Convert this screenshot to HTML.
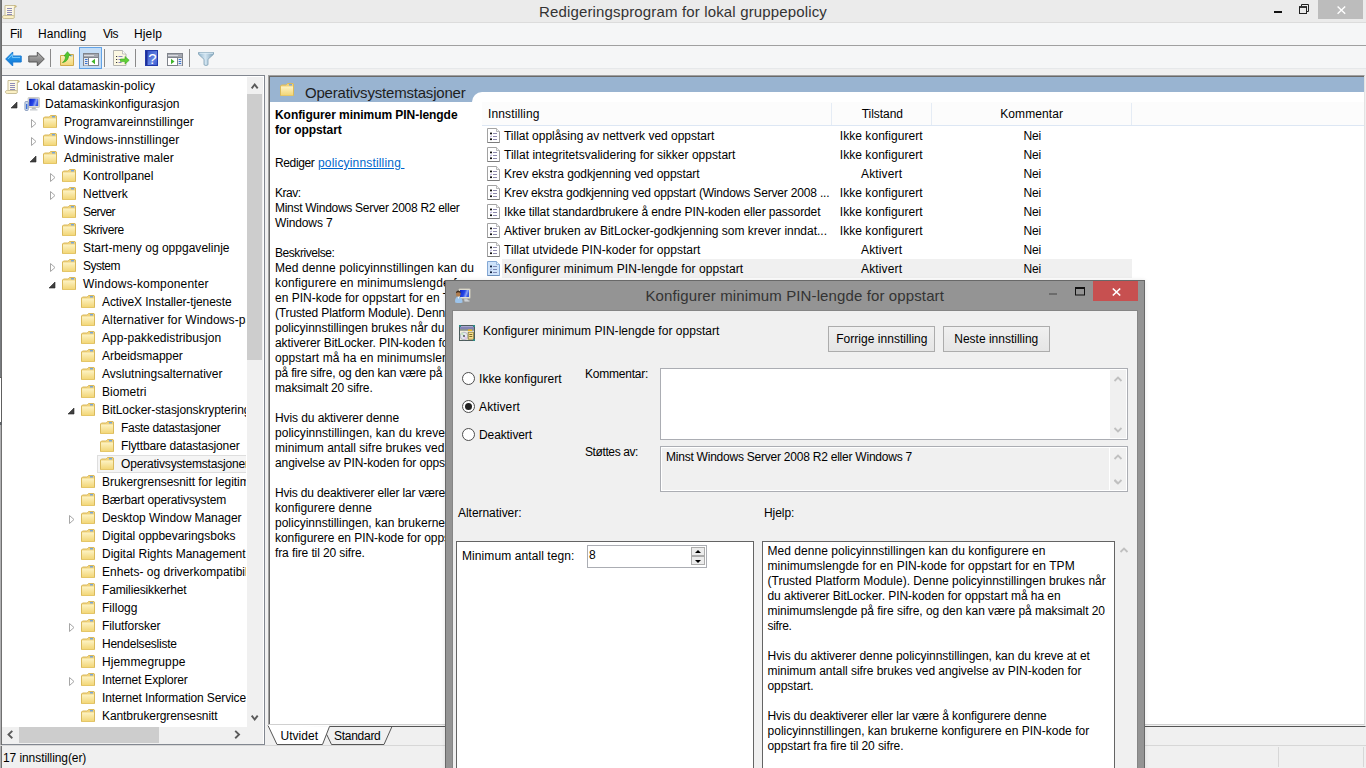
<!DOCTYPE html><html><head><meta charset="utf-8"><title>Redigeringsprogram for lokal gruppepolicy</title><style>
html,body{margin:0;padding:0}
body{width:1366px;height:768px;overflow:hidden;background:#f0f0f0;position:relative;font-family:"Liberation Sans",sans-serif;font-size:12px;color:#000;line-height:15px}
.a{position:absolute}
.t{position:absolute;white-space:nowrap;line-height:16px;height:16px}
.b{position:absolute;box-sizing:border-box}
svg{position:absolute;overflow:visible}
</style></head><body>
<svg width="0" height="0" style="position:absolute"><defs>
<linearGradient id="gf" x1="0" y1="0" x2="0" y2="1"><stop offset="0" stop-color="#fdf3c4"/><stop offset="1" stop-color="#f2d574"/></linearGradient>
<linearGradient id="gb" x1="0" y1="0" x2="0" y2="1"><stop offset="0" stop-color="#52bcfa"/><stop offset="0.500" stop-color="#1c8ce4"/><stop offset="1" stop-color="#1070d0"/></linearGradient>
<linearGradient id="gscr" x1="0" y1="0" x2="1" y2="0.300"><stop offset="0" stop-color="#0a22c8"/><stop offset="0.550" stop-color="#2848e8"/><stop offset="0.800" stop-color="#8ea4f4"/><stop offset="1" stop-color="#3858e0"/></linearGradient><linearGradient id="ghelp" x1="0" y1="0" x2="1" y2="1"><stop offset="0" stop-color="#2c48c0"/><stop offset="0.600" stop-color="#6484e4"/><stop offset="1" stop-color="#3454cc"/></linearGradient><linearGradient id="gfun" x1="0" y1="0" x2="1" y2="0"><stop offset="0" stop-color="#8fb4cc"/><stop offset="0.450" stop-color="#d4e6f2"/><stop offset="1" stop-color="#7fa4bc"/></linearGradient><linearGradient id="gg" x1="0" y1="0" x2="0" y2="1"><stop offset="0" stop-color="#b8b8b8"/><stop offset="1" stop-color="#6e6e6e"/></linearGradient>
<g id="folder"><path d="M6.500 1.500l1 -1h5.500l0.500 0.500v11.500h-13v-9.500l1 -1h4z" fill="#f0d27a" stroke="#d9b95c" stroke-width="1"/><path d="M1 3.500h12v9h-12z" fill="url(#gf)"/><rect x="9" y="1.200" width="3" height="1.200" fill="#5a9cf0"/></g>
<g id="scroll"><path d="M3 1.500h10.500c1.300 0 1.300 1.800 0 1.800h-1.200v8.700h-9.300z" fill="#fdf8e4" stroke="#c9bf98" stroke-width="1"/><path d="M12.300 1.500c1.600 0 1.600 1.800 0.200 1.800" fill="#e8d9a0" stroke="#c2a860" stroke-width="0.800"/><path d="M0.500 13c0 -1.500 0.800 -1.500 1.800 -1.500h9c1.400 0 1.400 3 0 3h-9c-1 0 -1.800 -0.300 -1.800 -1.500z" fill="#fbf0c4" stroke="#c9bf98" stroke-width="1"/><path d="M5 4.500h5M5 6.500h5M5 8.500h5M5 10.500h5" stroke="#8f8bb8" stroke-width="1"/></g>
<g id="pol"><path d="M0.500 0.500h9l3 3v11h-12z" fill="#fff" stroke="#a2a2a2"/><path d="M0.500 14.500h12" stroke="#7c7c7c"/><path d="M9.500 0.500v3h3" fill="#f4f4f4" stroke="#a8a8a8" stroke-width="0.800"/><rect x="3" y="4.600" width="2" height="1.700" fill="#111"/><rect x="3" y="10.400" width="2" height="1.700" fill="#111"/><path d="M3.200 9l1.600 -1" stroke="#8a7cc0" stroke-width="0.900"/><path d="M6 5.500h4M6 8.500h4M6 11.500h4" stroke="#8c88ac" stroke-width="1"/></g>
<g id="pols"><path d="M0.500 0.500h9l3 3v11h-12z" fill="#cfe3fa" stroke="#84a8d4"/><path d="M0.500 14.500h12" stroke="#6c90bc"/><path d="M9.500 0.500v3h3" fill="#e4effc" stroke="#84a8d4" stroke-width="0.800"/><rect x="3" y="4.600" width="2" height="1.700" fill="#10203c"/><rect x="3" y="10.400" width="2" height="1.700" fill="#10203c"/><path d="M3.200 9l1.600 -1" stroke="#7c84c0" stroke-width="0.900"/><path d="M6 5.500h4M6 8.500h4M6 11.500h4" stroke="#7c88b4" stroke-width="1"/></g>
<g id="exp"><path d="M0.500 0.500l4.500 4 -4.500 4z" fill="#fff" stroke="#a6a6a6" stroke-width="1"/></g>
<g id="col"><path d="M6 0v6h-6z" fill="#404040" stroke="#262626" stroke-width="0.600"/></g>
</defs></svg>
<div class="b" style="left:0px;top:0px;width:1366px;height:23px;background:#ebebeb;"></div>
<div class="b" style="left:0px;top:22px;width:1366px;height:1px;background:#dcdcdc;"></div>
<div class="b" style="left:0px;top:23px;width:1366px;height:22px;background:#f5f6f7;"></div>
<div class="b" style="left:0px;top:45px;width:1366px;height:1px;background:#a0a0a0;"></div>
<div class="b" style="left:0px;top:46px;width:1366px;height:22px;background:#f5f6f7;"></div>
<div class="b" style="left:0px;top:68px;width:1366px;height:1px;background:#e6e8ea;"></div>
<div class="b" style="left:0px;top:69px;width:1366px;height:6px;background:#f0f0f0;"></div>
<div class="b" style="left:0px;top:0px;width:1px;height:377px;background:#787b7e;"></div>
<div class="b" style="left:1px;top:0px;width:1px;height:377px;background:#6c6c6c;"></div>
<div class="b" style="left:0px;top:377px;width:2px;height:1px;background:#5e5e5e;"></div>
<div class="b" style="left:0px;top:378px;width:1px;height:44px;background:#fff;"></div>
<div class="b" style="left:1px;top:378px;width:1px;height:44px;background:#606060;"></div>
<div class="b" style="left:0px;top:422px;width:2px;height:3px;background:#606468;"></div>
<div class="b" style="left:0px;top:425px;width:1px;height:343px;background:#b0b0b2;"></div>
<div class="b" style="left:1px;top:425px;width:1px;height:343px;background:#707070;"></div>
<svg style="left:2px;top:3.5px" width="16" height="16"><use href="#scroll"/></svg>
<div class="t" style="left:539px;top:2px;font-size:15px;letter-spacing:0.151px;height:20px;line-height:20px;color:#333;">Redigeringsprogram for lokal gruppepolicy</div>
<div class="b" style="left:1318px;top:0px;width:45px;height:19px;background:#bcbcbc;"></div>
<svg style="left:1336.500px;top:5.500px" width="9" height="8"><path d="M0.600 0.500l7.600 7.200M8.200 0.500l-7.600 7.200" stroke="#fff" stroke-width="1.400"/></svg>
<div class="b" style="left:1274px;top:11px;width:8px;height:2px;background:#111;"></div>
<svg style="left:1299px;top:4px" width="10" height="10"><path d="M2.500 2v-1.500h7v7h-1.500" fill="none" stroke="#222"/><rect x="0.500" y="3" width="7" height="6.500" fill="none" stroke="#222"/><path d="M0 3h8" stroke="#222" stroke-width="1.600"/></svg>
<div class="t" style="left:10px;top:26px;font-size:12px;letter-spacing:-0.224px;">Fil</div>
<div class="t" style="left:38px;top:26px;font-size:12px;letter-spacing:0.103px;">Handling</div>
<div class="t" style="left:103px;top:26px;font-size:12px;letter-spacing:-0.484px;">Vis</div>
<div class="t" style="left:134px;top:26px;font-size:12px;letter-spacing:0.128px;">Hjelp</div>
<div class="b" style="left:79px;top:47px;width:23px;height:22px;background:#c4ddf6;border:1px solid #62a3e6;"></div>
<div class="b" style="left:50px;top:49px;width:1px;height:18px;background:#8a8a8a;"></div>
<div class="b" style="left:104px;top:49px;width:1px;height:18px;background:#8a8a8a;"></div>
<div class="b" style="left:135px;top:49px;width:1px;height:18px;background:#8a8a8a;"></div>
<div class="b" style="left:189px;top:49px;width:1px;height:18px;background:#8a8a8a;"></div>
<svg style="left:4.500px;top:50.500px" width="17" height="16"><path d="M0.700 8l7 -7v4h8.500v6h-8.500v4z" fill="url(#gb)" stroke="#1878d0" stroke-width="1"/><path d="M3 8l4.500 -4.500v3h7.500" fill="none" stroke="#8fd6ff" stroke-width="1" opacity="0.700"/></svg>
<svg style="left:27.500px;top:50.500px" width="17" height="16"><path d="M16.300 8l-7 -7v4h-8.500v6h8.500v4z" fill="url(#gg)" stroke="#585858" stroke-width="1"/></svg>
<svg style="left:60px;top:51px" width="16" height="16"><path d="M0.500 4.500h5l1 -1h7v11h-13z" fill="url(#gf)" stroke="#cfa94a"/><rect x="10" y="4.300" width="2.500" height="1" fill="#5a9cf0"/><path d="M2.500 11.500c2 -1 3 -3.500 3.200 -6.500h-1.700l3.500 -4.300 3 3.800h-1.800c-0.500 4 -2.200 6.500 -6.200 7z" fill="#52c82e" stroke="#2d9a16" stroke-width="0.600"/></svg>
<svg style="left:83px;top:53px" width="16" height="13"><rect x="0.500" y="0.500" width="15" height="12" fill="#fff" stroke="#80848c"/><rect x="1" y="1" width="14" height="3" fill="#a4a8b0"/><path d="M1 2.500h10" stroke="#e8e8ec" stroke-width="0.800"/><path d="M1 4.500h14" stroke="#80848c"/><rect x="1" y="5" width="4.500" height="7.500" fill="#e4e8f0"/><path d="M5.500 4.500v8.500" stroke="#80848c"/><path d="M2 6.500h2.500M2 8.500h2.500M2 10.500h2.500" stroke="#3b74d0" stroke-width="1"/><path d="M12 5.800v5.400l-3.500 -2.700z" fill="#3fb52a"/></svg>
<svg style="left:113px;top:50px" width="17" height="17"><path d="M0.500 0.500h9l3.500 3.500v11.500h-12.500z" fill="#fcf8e2" stroke="#b4b4b0"/><path d="M9.500 0.500v3.500h3.500" fill="#fff" stroke="#b4b4b0" stroke-width="0.800"/><path d="M3 6.500h1.200M3 9.500h1.200M3 12.500h1.200" stroke="#333" stroke-width="1.200"/><path d="M5.500 6.500h4M5.500 9.500h2.500M5.500 12.500h3" stroke="#8a86c0"/><path d="M7.500 9h4.500v-2.500l4.200 3.800 -4.200 3.800v-2.500h-4.500z" fill="#5fd036" stroke="#35a81c" stroke-width="0.600"/></svg>
<svg style="left:145px;top:50px" width="13" height="16"><rect x="0" y="0" width="13" height="16" fill="url(#ghelp)"/><rect x="0" y="0" width="2.500" height="16" fill="#1c2f98"/><rect x="0.500" y="0.500" width="12" height="15" fill="none" stroke="#2238a8"/><text x="7.500" y="13.500" font-family="Liberation Sans,sans-serif" font-size="15" fill="#fff" text-anchor="middle">?</text></svg>
<svg style="left:167px;top:53px" width="16" height="13"><rect x="0.500" y="0.500" width="15" height="12" fill="#fff" stroke="#80848c"/><rect x="1" y="1" width="14" height="3" fill="#a4a8b0"/><path d="M1 2.500h10" stroke="#e8e8ec" stroke-width="0.800"/><path d="M1 4.500h14" stroke="#80848c"/><rect x="10.500" y="5" width="4.500" height="7.500" fill="#e4e8f0"/><path d="M10.500 4.500v8.500" stroke="#80848c"/><path d="M11.700 6.500h2.500M11.700 8.500h2.500M11.700 10.500h2.500" stroke="#3b74d0" stroke-width="1"/><path d="M4 5.800v5.400l3.500 -2.700z" fill="#3fb52a"/></svg>
<svg style="left:198px;top:51px" width="17" height="16"><path d="M1 1.500h14.500v1.800l-5.500 5v5.500q-2 1.500 -4 0v-5.500l-5.500 -5v-1.800z" fill="url(#gfun)" stroke="#7f9fb4" stroke-width="0.800"/><path d="M1.500 2.200h13.500" stroke="#dcecf6" stroke-width="1"/></svg>
<div class="b" style="left:2px;top:75px;width:263px;height:670px;background:#fff;border:1px solid #828790;border-left:0;"></div>
<div class="a" style="left:3px;top:76px;width:243px;height:650px;overflow:hidden">
<svg style="left:2px;top:3px" width="16" height="16"><use href="#scroll"/></svg>
<div class="t" style="left:23px;top:2px;font-size:12px;letter-spacing:0.041px;">Lokal datamaskin-policy</div>
<svg style="left:8px;top:26px" width="6" height="6"><use href="#col"/></svg>
<svg style="left:21px;top:20px" width="16" height="16"><rect x="4" y="1.500" width="11.500" height="10" rx="0.800" fill="#dcdcd4" stroke="#b8b8b0" stroke-width="0.600"/><rect x="5.200" y="2.700" width="9" height="7.300" fill="url(#gscr)"/><path d="M8 11.500h3.500l0.500 1.800h-4.500z" fill="#b4b8bc"/><rect x="6" y="13.200" width="7.500" height="1.300" fill="#c8ccd0"/><rect x="0.900" y="5.500" width="3.400" height="9" rx="1" fill="#c9d6ea" stroke="#7d93b8" stroke-width="0.800"/><rect x="2" y="8" width="1.300" height="5" fill="#3b6fd8"/></svg>
<div class="t" style="left:42px;top:20px;font-size:12px;letter-spacing:-0.011px;">Datamaskinkonfigurasjon</div>
<svg style="left:28px;top:43px" width="6" height="9"><use href="#exp"/></svg>
<svg style="left:40px;top:39px" width="16" height="16"><use href="#folder"/></svg>
<div class="t" style="left:61px;top:38px;font-size:12px;letter-spacing:0.015px;">Programvareinnstillinger</div>
<svg style="left:28px;top:61px" width="6" height="9"><use href="#exp"/></svg>
<svg style="left:40px;top:57px" width="16" height="16"><use href="#folder"/></svg>
<div class="t" style="left:61px;top:56px;font-size:12px;letter-spacing:0.132px;">Windows-innstillinger</div>
<svg style="left:27px;top:80px" width="6" height="6"><use href="#col"/></svg>
<svg style="left:40px;top:75px" width="16" height="16"><use href="#folder"/></svg>
<div class="t" style="left:61px;top:74px;font-size:12px;letter-spacing:0.052px;">Administrative maler</div>
<svg style="left:47px;top:97px" width="6" height="9"><use href="#exp"/></svg>
<svg style="left:59px;top:93px" width="16" height="16"><use href="#folder"/></svg>
<div class="t" style="left:80px;top:92px;font-size:12px;letter-spacing:0.034px;">Kontrollpanel</div>
<svg style="left:47px;top:115px" width="6" height="9"><use href="#exp"/></svg>
<svg style="left:59px;top:111px" width="16" height="16"><use href="#folder"/></svg>
<div class="t" style="left:80px;top:110px;font-size:12px;letter-spacing:0.008px;">Nettverk</div>
<svg style="left:59px;top:129px" width="16" height="16"><use href="#folder"/></svg>
<div class="t" style="left:80px;top:128px;font-size:12px;letter-spacing:-0.557px;">Server</div>
<svg style="left:59px;top:147px" width="16" height="16"><use href="#folder"/></svg>
<div class="t" style="left:80px;top:146px;font-size:12px;letter-spacing:-0.408px;">Skrivere</div>
<svg style="left:59px;top:165px" width="16" height="16"><use href="#folder"/></svg>
<div class="t" style="left:80px;top:164px;font-size:12px;letter-spacing:0.016px;">Start-meny og oppgavelinje</div>
<svg style="left:47px;top:187px" width="6" height="9"><use href="#exp"/></svg>
<svg style="left:59px;top:183px" width="16" height="16"><use href="#folder"/></svg>
<div class="t" style="left:80px;top:182px;font-size:12px;letter-spacing:-0.503px;">System</div>
<svg style="left:46px;top:206px" width="6" height="6"><use href="#col"/></svg>
<svg style="left:59px;top:201px" width="16" height="16"><use href="#folder"/></svg>
<div class="t" style="left:80px;top:200px;font-size:12px;letter-spacing:0.16px;">Windows-komponenter</div>
<svg style="left:78px;top:219px" width="16" height="16"><use href="#folder"/></svg>
<div class="t" style="left:99px;top:218px;font-size:12px;letter-spacing:-0.099px;">ActiveX Installer-tjeneste</div>
<svg style="left:78px;top:237px" width="16" height="16"><use href="#folder"/></svg>
<div class="t" style="left:99px;top:236px;font-size:12px;letter-spacing:0.108px;">Alternativer for Windows-på</div>
<svg style="left:78px;top:255px" width="16" height="16"><use href="#folder"/></svg>
<div class="t" style="left:99px;top:254px;font-size:12px;letter-spacing:0.056px;">App-pakkedistribusjon</div>
<svg style="left:78px;top:273px" width="16" height="16"><use href="#folder"/></svg>
<div class="t" style="left:99px;top:272px;font-size:12px;letter-spacing:-0.048px;">Arbeidsmapper</div>
<svg style="left:78px;top:291px" width="16" height="16"><use href="#folder"/></svg>
<div class="t" style="left:99px;top:290px;font-size:12px;letter-spacing:-0.001px;">Avslutningsalternativer</div>
<svg style="left:78px;top:309px" width="16" height="16"><use href="#folder"/></svg>
<div class="t" style="left:99px;top:308px;font-size:12px;letter-spacing:0.061px;">Biometri</div>
<svg style="left:65px;top:332px" width="6" height="6"><use href="#col"/></svg>
<svg style="left:78px;top:327px" width="16" height="16"><use href="#folder"/></svg>
<div class="t" style="left:99px;top:326px;font-size:12px;letter-spacing:-0.086px;">BitLocker-stasjonskryptering</div>
<svg style="left:97px;top:345px" width="16" height="16"><use href="#folder"/></svg>
<div class="t" style="left:118px;top:344px;font-size:12px;letter-spacing:-0.311px;">Faste datastasjoner</div>
<svg style="left:97px;top:363px" width="16" height="16"><use href="#folder"/></svg>
<div class="t" style="left:118px;top:362px;font-size:12px;letter-spacing:-0.155px;">Flyttbare datastasjoner</div>
<div class="b" style="left:94px;top:379px;width:200px;height:18px;background:#f5f5f5;border:1px solid #dedede;"></div>
<svg style="left:97px;top:381px" width="16" height="16"><use href="#folder"/></svg>
<div class="t" style="left:118px;top:380px;font-size:12px;letter-spacing:-0.185px;">Operativsystemstasjoner</div>
<svg style="left:78px;top:399px" width="16" height="16"><use href="#folder"/></svg>
<div class="t" style="left:99px;top:398px;font-size:12px;letter-spacing:-0.061px;">Brukergrensesnitt for legitimasjon</div>
<svg style="left:78px;top:417px" width="16" height="16"><use href="#folder"/></svg>
<div class="t" style="left:99px;top:416px;font-size:12px;letter-spacing:-0.154px;">Bærbart operativsystem</div>
<svg style="left:66px;top:439px" width="6" height="9"><use href="#exp"/></svg>
<svg style="left:78px;top:435px" width="16" height="16"><use href="#folder"/></svg>
<div class="t" style="left:99px;top:434px;font-size:12px;letter-spacing:-0.056px;">Desktop Window Manager</div>
<svg style="left:78px;top:453px" width="16" height="16"><use href="#folder"/></svg>
<div class="t" style="left:99px;top:452px;font-size:12px;letter-spacing:-0.025px;">Digital oppbevaringsboks</div>
<svg style="left:78px;top:471px" width="16" height="16"><use href="#folder"/></svg>
<div class="t" style="left:99px;top:470px;font-size:12px;letter-spacing:-0.023px;">Digital Rights Management for Windows Media</div>
<svg style="left:78px;top:489px" width="16" height="16"><use href="#folder"/></svg>
<div class="t" style="left:99px;top:488px;font-size:12px;letter-spacing:0.01px;">Enhets- og driverkompatibilitet</div>
<svg style="left:78px;top:507px" width="16" height="16"><use href="#folder"/></svg>
<div class="t" style="left:99px;top:506px;font-size:12px;letter-spacing:-0.138px;">Familiesikkerhet</div>
<svg style="left:78px;top:525px" width="16" height="16"><use href="#folder"/></svg>
<div class="t" style="left:99px;top:524px;font-size:12px;letter-spacing:0.02px;">Fillogg</div>
<svg style="left:66px;top:547px" width="6" height="9"><use href="#exp"/></svg>
<svg style="left:78px;top:543px" width="16" height="16"><use href="#folder"/></svg>
<div class="t" style="left:99px;top:542px;font-size:12px;letter-spacing:-0.07px;">Filutforsker</div>
<svg style="left:78px;top:561px" width="16" height="16"><use href="#folder"/></svg>
<div class="t" style="left:99px;top:560px;font-size:12px;letter-spacing:-0.235px;">Hendelsesliste</div>
<svg style="left:78px;top:579px" width="16" height="16"><use href="#folder"/></svg>
<div class="t" style="left:99px;top:578px;font-size:12px;letter-spacing:0.121px;">Hjemmegruppe</div>
<svg style="left:66px;top:601px" width="6" height="9"><use href="#exp"/></svg>
<svg style="left:78px;top:597px" width="16" height="16"><use href="#folder"/></svg>
<div class="t" style="left:99px;top:596px;font-size:12px;letter-spacing:-0.189px;">Internet Explorer</div>
<svg style="left:78px;top:615px" width="16" height="16"><use href="#folder"/></svg>
<div class="t" style="left:99px;top:614px;font-size:12px;letter-spacing:-0.122px;">Internet Information Services</div>
<svg style="left:78px;top:633px" width="16" height="16"><use href="#folder"/></svg>
<div class="t" style="left:99px;top:632px;font-size:12px;letter-spacing:-0.091px;">Kantbrukergrensesnitt</div>
</div>
<div class="b" style="left:247px;top:77px;width:16px;height:650px;background:#f0f0f0;"></div>
<div class="b" style="left:247px;top:94px;width:15px;height:266px;background:#cdcdcd;"></div>
<svg style="left:251px;top:82px" width="8" height="8"><path d="M0.700 6.300l3 -3.800 3 3.800" fill="none" stroke="#5a5a5a" stroke-width="1.900"/></svg>
<svg style="left:251px;top:714px" width="8" height="8"><path d="M0.700 1.700l3 3.800 3 -3.800" fill="none" stroke="#5a5a5a" stroke-width="1.900"/></svg>
<div class="b" style="left:2px;top:727px;width:261px;height:17px;background:#f0f0f0;"></div>
<div class="b" style="left:19px;top:727px;width:140px;height:16px;background:#cdcdcd;"></div>
<svg style="left:6px;top:730px" width="8" height="9"><path d="M6.300 0.900l-3.800 3.700 3.800 3.700" fill="none" stroke="#5a5a5a" stroke-width="1.900"/></svg>
<svg style="left:234px;top:730px" width="8" height="9"><path d="M1.200 0.900l3.800 3.700 -3.800 3.700" fill="none" stroke="#5a5a5a" stroke-width="1.900"/></svg>
<div class="b" style="left:268px;top:75px;width:1097px;height:650px;background:#fff;border-top:1px solid #a0a0a0;border-left:1px solid #a0a0a0;border-bottom:1px solid #d0d0d0;border-right:1px solid #e3e3e3;"></div>
<div class="b" style="left:269px;top:76px;width:1095px;height:648px;background:#fff;border-top:1px solid #696969;border-left:1px solid #696969;"></div>
<div class="b" style="left:270px;top:77px;width:1094px;height:25px;background:#99b4d1;"></div>
<div class="b" style="left:472px;top:92px;width:892px;height:40px;background:#fff;border-top-left-radius:10px 10px;"></div>
<svg style="left:280px;top:83px" width="16" height="16"><use href="#folder"/></svg>
<div class="t" style="left:305px;top:83px;font-size:15px;letter-spacing:-0.198px;height:20px;line-height:20px;color:#1e1e1e;">Operativsystemstasjoner</div>
<div class="t" style="left:275px;top:107px;font-size:12px;font-weight:700;letter-spacing:-0.052px;">Konfigurer minimum PIN-lengde</div>
<div class="t" style="left:275px;top:122px;font-size:12px;font-weight:700;letter-spacing:-0.049px;">for oppstart</div>
<div class="t" style="left:275px;top:185px;font-size:12px;letter-spacing:-0.503px;">Krav:</div>
<div class="t" style="left:275px;top:200px;font-size:12px;letter-spacing:-0.282px;">Minst Windows Server 2008 R2 eller</div>
<div class="t" style="left:275px;top:215px;font-size:12px;letter-spacing:-0.132px;">Windows 7</div>
<div class="t" style="left:275px;top:245px;font-size:12px;letter-spacing:-0.441px;">Beskrivelse:</div>
<div class="t" style="left:275px;top:260px;font-size:12px;letter-spacing:0.079px;">Med denne policyinnstillingen kan du</div>
<div class="t" style="left:275px;top:275px;font-size:12px;letter-spacing:0.14px;">konfigurere en minimumslengde for</div>
<div class="t" style="left:275px;top:290px;font-size:12px;letter-spacing:-0.005px;">en PIN-kode for oppstart for en TPM</div>
<div class="t" style="left:275px;top:305px;font-size:12px;letter-spacing:-0.139px;">(Trusted Platform Module). Denne</div>
<div class="t" style="left:275px;top:320px;font-size:12px;letter-spacing:-0.021px;">policyinnstillingen brukes når du</div>
<div class="t" style="left:275px;top:335px;font-size:12px;letter-spacing:-0.064px;">aktiverer BitLocker. PIN-koden for</div>
<div class="t" style="left:275px;top:350px;font-size:12px;letter-spacing:0.104px;">oppstart må ha en minimumslengde</div>
<div class="t" style="left:275px;top:365px;font-size:12px;letter-spacing:-0.166px;">på fire sifre, og den kan være på</div>
<div class="t" style="left:275px;top:380px;font-size:12px;letter-spacing:-0.128px;">maksimalt 20 sifre.</div>
<div class="t" style="left:275px;top:410px;font-size:12px;letter-spacing:-0.09px;">Hvis du aktiverer denne</div>
<div class="t" style="left:275px;top:425px;font-size:12px;letter-spacing:0.037px;">policyinnstillingen, kan du kreve at et</div>
<div class="t" style="left:275px;top:440px;font-size:12px;letter-spacing:0.021px;">minimum antall sifre brukes ved</div>
<div class="t" style="left:275px;top:455px;font-size:12px;letter-spacing:-0.111px;">angivelse av PIN-koden for oppstart.</div>
<div class="t" style="left:275px;top:485px;font-size:12px;letter-spacing:-0.178px;">Hvis du deaktiverer eller lar være å</div>
<div class="t" style="left:275px;top:500px;font-size:12px;letter-spacing:0.015px;">konfigurere denne</div>
<div class="t" style="left:275px;top:515px;font-size:12px;letter-spacing:-0.003px;">policyinnstillingen, kan brukerne</div>
<div class="t" style="left:275px;top:530px;font-size:12px;letter-spacing:-0.057px;">konfigurere en PIN-kode for oppstart</div>
<div class="t" style="left:275px;top:545px;font-size:12px;letter-spacing:-0.106px;">fra fire til 20 sifre.</div>
<div class="t" style="left:275px;top:155px;font-size:12px;letter-spacing:-0.362px;">Rediger</div>
<div class="t" style="left:318px;top:155px;font-size:12px;letter-spacing:0.174px;color:#0066cc;text-decoration:underline;white-space:pre;">policyinnstilling </div>
<div class="b" style="left:482px;top:102px;width:882px;height:24px;background:#fcfcfc;border-bottom:1px solid #dde7f4;"></div>
<div class="b" style="left:831px;top:103px;width:1px;height:22px;background:#e5ecf5;"></div>
<div class="b" style="left:931px;top:103px;width:1px;height:22px;background:#e5ecf5;"></div>
<div class="b" style="left:1131px;top:103px;width:1px;height:22px;background:#e5ecf5;"></div>
<div class="t" style="left:488px;top:106px;font-size:12px;letter-spacing:0.134px;">Innstilling</div>
<div class="t" style="left:861.8px;top:106px;font-size:12px;letter-spacing:-0.06px;">Tilstand</div>
<div class="t" style="left:1000.3px;top:106px;font-size:12px;letter-spacing:0.074px;">Kommentar</div>
<svg style="left:487px;top:128px" width="13" height="15"><use href="#pol"/></svg>
<div class="t" style="left:504px;top:128px;font-size:12px;letter-spacing:-0.019px;">Tillat opplåsing av nettverk ved oppstart</div>
<div class="t" style="left:839.8px;top:128px;font-size:12px;letter-spacing:0.047px;">Ikke konfigurert</div>
<div class="t" style="left:1023.6px;top:128px;font-size:12px;letter-spacing:-0.272px;">Nei</div>
<svg style="left:487px;top:147px" width="13" height="15"><use href="#pol"/></svg>
<div class="t" style="left:504px;top:147px;font-size:12px;letter-spacing:0.024px;">Tillat integritetsvalidering for sikker oppstart</div>
<div class="t" style="left:839.8px;top:147px;font-size:12px;letter-spacing:0.047px;">Ikke konfigurert</div>
<div class="t" style="left:1023.6px;top:147px;font-size:12px;letter-spacing:-0.272px;">Nei</div>
<svg style="left:487px;top:166px" width="13" height="15"><use href="#pol"/></svg>
<div class="t" style="left:504px;top:166px;font-size:12px;letter-spacing:-0.073px;">Krev ekstra godkjenning ved oppstart</div>
<div class="t" style="left:861px;top:166px;font-size:12px;letter-spacing:0.148px;">Aktivert</div>
<div class="t" style="left:1023.6px;top:166px;font-size:12px;letter-spacing:-0.272px;">Nei</div>
<svg style="left:487px;top:185px" width="13" height="15"><use href="#pol"/></svg>
<div class="t" style="left:504px;top:185px;font-size:12px;letter-spacing:-0.177px;">Krev ekstra godkjenning ved oppstart (Windows Server 2008 ...</div>
<div class="t" style="left:839.8px;top:185px;font-size:12px;letter-spacing:0.047px;">Ikke konfigurert</div>
<div class="t" style="left:1023.6px;top:185px;font-size:12px;letter-spacing:-0.272px;">Nei</div>
<svg style="left:487px;top:204px" width="13" height="15"><use href="#pol"/></svg>
<div class="t" style="left:504px;top:204px;font-size:12px;letter-spacing:-0.117px;">Ikke tillat standardbrukere å endre PIN-koden eller passordet</div>
<div class="t" style="left:839.8px;top:204px;font-size:12px;letter-spacing:0.047px;">Ikke konfigurert</div>
<div class="t" style="left:1023.6px;top:204px;font-size:12px;letter-spacing:-0.272px;">Nei</div>
<svg style="left:487px;top:223px" width="13" height="15"><use href="#pol"/></svg>
<div class="t" style="left:504px;top:223px;font-size:12px;letter-spacing:-0.008px;">Aktiver bruken av BitLocker-godkjenning som krever inndat...</div>
<div class="t" style="left:839.8px;top:223px;font-size:12px;letter-spacing:0.047px;">Ikke konfigurert</div>
<div class="t" style="left:1023.6px;top:223px;font-size:12px;letter-spacing:-0.272px;">Nei</div>
<svg style="left:487px;top:242px" width="13" height="15"><use href="#pol"/></svg>
<div class="t" style="left:504px;top:242px;font-size:12px;letter-spacing:0.04px;">Tillat utvidede PIN-koder for oppstart</div>
<div class="t" style="left:861px;top:242px;font-size:12px;letter-spacing:0.148px;">Aktivert</div>
<div class="t" style="left:1023.6px;top:242px;font-size:12px;letter-spacing:-0.272px;">Nei</div>
<div class="b" style="left:502px;top:259px;width:630px;height:19px;background:#f0f0f0;"></div>
<svg style="left:487px;top:261px" width="13" height="15"><use href="#pols"/></svg>
<div class="t" style="left:504px;top:261px;font-size:12px;letter-spacing:0.106px;">Konfigurer minimum PIN-lengde for oppstart</div>
<div class="t" style="left:861px;top:261px;font-size:12px;letter-spacing:0.148px;">Aktivert</div>
<div class="t" style="left:1023.6px;top:261px;font-size:12px;letter-spacing:-0.272px;">Nei</div>
<div class="b" style="left:268px;top:725px;width:1098px;height:20px;background:#f0f0f0;"></div>
<svg style="left:268px;top:725px" width="1098" height="20"><path d="M0 0.500l9 19h45.500l7 -18" fill="#fff" stroke="#555" stroke-width="1"/><path d="M61.500 1.500h1036" stroke="#555" stroke-width="1"/><path d="M124 1.500l-8 18h-52.500l-4.800 -10" fill="none" stroke="#555" stroke-width="1"/><path d="M0 0h61v1h-60z" fill="#fff"/></svg>
<div class="t" style="left:280.5px;top:728px;font-size:12px;letter-spacing:0.02px;">Utvidet</div>
<div class="t" style="left:334px;top:728px;font-size:12px;letter-spacing:-0.275px;">Standard</div>
<div class="b" style="left:0px;top:745px;width:1366px;height:1px;background:#d7d7d7;"></div>
<div class="b" style="left:2px;top:746px;width:1364px;height:22px;background:#f0f0f0;"></div>
<div class="b" style="left:1278px;top:747px;width:1px;height:20px;background:#d7d7d7;"></div>
<div class="b" style="left:1363px;top:747px;width:1px;height:20px;background:#d7d7d7;"></div>
<div class="t" style="left:3px;top:750px;font-size:12px;letter-spacing:-0.081px;">17 innstilling(er)</div>
<div class="b" style="left:445px;top:280px;width:700px;height:500px;background:#949494;border:1px solid #686868;box-shadow:0 0 4px rgba(0,0,0,0.10);"></div>
<div class="b" style="left:452px;top:310px;width:686px;height:470px;background:#f0f0f0;border:1px solid #858585;"></div>
<svg style="left:455px;top:287.500px" width="17" height="16"><rect x="3.800" y="0.800" width="11.500" height="9.700" rx="0.800" fill="#e4e2d4" stroke="#b8b6a8" stroke-width="0.600"/><rect x="5" y="2" width="9" height="7" fill="url(#gscr)"/><path d="M9 10.500h3l1.500 2.500h-4z" fill="#c4c8cc"/><path d="M9.500 13h5" stroke="#d8dce0" stroke-width="1"/><ellipse cx="3.300" cy="5.800" rx="2.300" ry="2.900" fill="#b07c4c"/><path d="M1 5.200c0 -3.500 4.600 -3.500 4.600 0c-1.500 -1.200 -3 -1.200 -4.600 0z" fill="#3a2c20"/><path d="M0.200 14.500c-0.500 -4 1 -5.800 3.200 -5.800s4.200 1.800 4.200 5.800c-2.500 0.800 -5 0.800 -7.400 0z" fill="#9cc4ec"/><path d="M2.700 8.800l0.700 2.500 0.700 -2.500z" fill="#fff"/></svg>
<div class="t" style="left:645.5px;top:286px;font-size:15px;letter-spacing:0.12px;height:20px;line-height:20px;color:#333;">Konfigurer minimum PIN-lengde for oppstart</div>
<div class="b" style="left:1093px;top:281px;width:45px;height:20px;background:#c75050;"></div>
<svg style="left:1111.500px;top:287.500px" width="9" height="8"><path d="M0.800 0.500l7.400 7M8.200 0.500l-7.400 7" stroke="#fff" stroke-width="1.700"/></svg>
<div class="b" style="left:1049px;top:293px;width:8px;height:2px;background:#6c6c6c;"></div>
<svg style="left:1075px;top:287px" width="11" height="9"><rect x="0.500" y="1" width="9" height="7" fill="none" stroke="#111"/><path d="M0 1h10" stroke="#111" stroke-width="2"/></svg>
<svg style="left:459px;top:325px" width="17" height="17"><rect x="0.500" y="0.500" width="15" height="15" fill="#f4f0dc" stroke="#4c5c5c"/><rect x="1" y="1" width="14" height="3.400" fill="#8484b4"/><path d="M1 1.500h14" stroke="#a8a8d0" stroke-width="1"/><rect x="0" y="0" width="2" height="2" fill="#2c8c84"/><rect x="14" y="0" width="2" height="2" fill="#2c8c84"/><path d="M1 5h14" stroke="#4c5c5c" stroke-width="1"/><rect x="9" y="4.500" width="4" height="1.500" fill="#f0b820"/><circle cx="5" cy="11" r="3.800" fill="#e4e8f0" stroke="#a0a4b4" stroke-width="0.700"/><path d="M5 11l-3.300 -1.800a3.800 3.800 0 0 1 2.300 -1.900z" fill="#c8e8c0"/><path d="M5 11l3.300 1.800a3.800 3.800 0 0 1 -2.300 1.900z" fill="#e4c8ec"/><circle cx="5" cy="11" r="0.900" fill="#444"/><rect x="9.200" y="7.200" width="5.300" height="7" fill="#f8e08c" stroke="#84783c" stroke-width="0.800"/><path d="M10.300 9.500h3M10.300 11.500h3" stroke="#6c5c24" stroke-width="0.900"/><rect x="14" y="14" width="2" height="2" fill="#2c8c84"/></svg>
<div class="t" style="left:483px;top:323px;font-size:12px;letter-spacing:0.041px;">Konfigurer minimum PIN-lengde for oppstart</div>
<div class="b" style="left:828px;top:326px;width:107px;height:26px;border:1px solid #acacac;background:linear-gradient(#f0f0f0,#e5e5e5);text-align:center;line-height:23px;white-space:nowrap"></div>
<div class="b" style="left:943px;top:326px;width:107px;height:26px;border:1px solid #acacac;background:linear-gradient(#f0f0f0,#e5e5e5);text-align:center;line-height:23px;white-space:nowrap"></div>
<div class="t" style="left:836.25px;top:330.5px;font-size:12px;letter-spacing:0.029px;">Forrige innstilling</div>
<div class="t" style="left:954.25px;top:330.5px;font-size:12px;letter-spacing:-0.003px;">Neste innstilling</div>
<div class="b" style="left:462px;top:372px;width:13px;height:13px;border:1px solid #4d4d4d;border-radius:50%;background:#fff"></div>
<div class="t" style="left:479px;top:371px;font-size:12px;letter-spacing:0.044px;">Ikke konfigurert</div>
<div class="b" style="left:462px;top:400px;width:13px;height:13px;border:1px solid #4d4d4d;border-radius:50%;background:#fff"></div>
<div class="b" style="left:465px;top:403px;width:7px;height:7px;border-radius:50%;background:#222"></div>
<div class="t" style="left:479px;top:399px;font-size:12px;letter-spacing:0.123px;">Aktivert</div>
<div class="b" style="left:462px;top:428px;width:13px;height:13px;border:1px solid #4d4d4d;border-radius:50%;background:#fff"></div>
<div class="t" style="left:479px;top:427px;font-size:12px;letter-spacing:-0.103px;">Deaktivert</div>
<div class="t" style="left:585px;top:366px;font-size:12px;letter-spacing:-0.211px;">Kommentar:</div>
<div class="b" style="left:660px;top:368px;width:468px;height:72px;background:#fff;border:1px solid #abadb3;"></div>
<div class="b" style="left:1110px;top:370px;width:16px;height:68px;background:#f0f0f0;"></div>
<svg style="left:1114px;top:376px" width="8" height="6"><path d="M0.500 5l3.500 -3.500 3.500 3.500" fill="none" stroke="#c0c0c0" stroke-width="1.800"/></svg>
<svg style="left:1114px;top:427px" width="8" height="6"><path d="M0.500 1l3.500 3.500 3.500 -3.500" fill="none" stroke="#c0c0c0" stroke-width="1.800"/></svg>
<div class="t" style="left:585px;top:444px;font-size:12px;letter-spacing:-0.396px;">Støttes av:</div>
<div class="b" style="left:660px;top:446px;width:468px;height:46px;background:#f0f0f0;border:1px solid #abadb3;"></div>
<div class="b" style="left:661px;top:447px;width:466px;height:44px;background:#f0f0f0;border:1px solid #fff;"></div>
<div class="b" style="left:1109px;top:447px;width:18px;height:44px;background:#f0f0f0;border:1px solid #fff;"></div>
<svg style="left:1114px;top:454px" width="8" height="6"><path d="M0.500 5l3.500 -3.500 3.500 3.500" fill="none" stroke="#c0c0c0" stroke-width="1.800"/></svg>
<svg style="left:1114px;top:479px" width="8" height="6"><path d="M0.500 1l3.500 3.500 -3.500 -3.500" fill="none" stroke="#c0c0c0" stroke-width="1.800"/><path d="M0.500 1l3.500 3.500 3.500 -3.500" fill="none" stroke="#c0c0c0" stroke-width="1.800"/></svg>
<div class="t" style="left:666px;top:449px;font-size:12px;letter-spacing:-0.23px;">Minst Windows Server 2008 R2 eller Windows 7</div>
<div class="t" style="left:458px;top:505px;font-size:12px;letter-spacing:-0.041px;">Alternativer:</div>
<div class="t" style="left:764px;top:505px;font-size:12px;letter-spacing:-0.065px;">Hjelp:</div>
<div class="b" style="left:456px;top:541px;width:298px;height:240px;background:#fff;border:1px solid #646464;"></div>
<div class="t" style="left:462px;top:548px;font-size:12px;letter-spacing:0.089px;">Minimum antall tegn:</div>
<div class="b" style="left:587px;top:545px;width:120px;height:23px;background:#fff;border:1px solid #abadb3;"></div>
<div class="t" style="left:589px;top:547px;font-size:12px;letter-spacing:0.08px;">8</div>
<div class="b" style="left:691px;top:547px;width:14px;height:9px;background:#ececec;border:1px solid #acacac;"></div>
<div class="b" style="left:691px;top:556px;width:14px;height:9px;background:#ececec;border:1px solid #acacac;"></div>
<svg style="left:695px;top:550px" width="6" height="3"><path d="M0 3l3 -3 3 3z" fill="#000"/></svg>
<svg style="left:695px;top:559.500px" width="6" height="3"><path d="M0 0l3 3 3 -3z" fill="#000"/></svg>
<div class="b" style="left:762px;top:541px;width:353px;height:240px;background:#fff;border:1px solid #646464;"></div>
<div class="t" style="left:767.5px;top:543px;font-size:12px;letter-spacing:0.034px;">Med denne policyinnstillingen kan du konfigurere en</div>
<div class="t" style="left:767.5px;top:558px;font-size:12px;letter-spacing:0.049px;">minimumslengde for en PIN-kode for oppstart for en TPM</div>
<div class="t" style="left:767.5px;top:573px;font-size:12px;letter-spacing:0.009px;">(Trusted Platform Module). Denne policyinnstillingen brukes når</div>
<div class="t" style="left:767.5px;top:588px;font-size:12px;letter-spacing:-0.057px;">du aktiverer BitLocker. PIN-koden for oppstart må ha en</div>
<div class="t" style="left:767.5px;top:603px;font-size:12px;letter-spacing:-0.055px;">minimumslengde på fire sifre, og den kan være på maksimalt 20</div>
<div class="t" style="left:767.5px;top:618px;font-size:12px;letter-spacing:-0.319px;">sifre.</div>
<div class="t" style="left:767.5px;top:648px;font-size:12px;letter-spacing:-0.04px;">Hvis du aktiverer denne policyinnstillingen, kan du kreve at et</div>
<div class="t" style="left:767.5px;top:663px;font-size:12px;letter-spacing:-0.039px;">minimum antall sifre brukes ved angivelse av PIN-koden for</div>
<div class="t" style="left:767.5px;top:678px;font-size:12px;letter-spacing:-0.089px;">oppstart.</div>
<div class="t" style="left:767.5px;top:708px;font-size:12px;letter-spacing:-0.131px;">Hvis du deaktiverer eller lar være å konfigurere denne</div>
<div class="t" style="left:767.5px;top:723px;font-size:12px;letter-spacing:0.014px;">policyinnstillingen, kan brukerne konfigurere en PIN-kode for</div>
<div class="t" style="left:767.5px;top:738px;font-size:12px;letter-spacing:-0.091px;">oppstart fra fire til 20 sifre.</div>
<svg style="left:1120px;top:547px" width="8" height="6"><path d="M0.500 5l3.500 -3.500 3.500 3.500" fill="none" stroke="#c0c0c0" stroke-width="1.800"/></svg>
</body></html>
